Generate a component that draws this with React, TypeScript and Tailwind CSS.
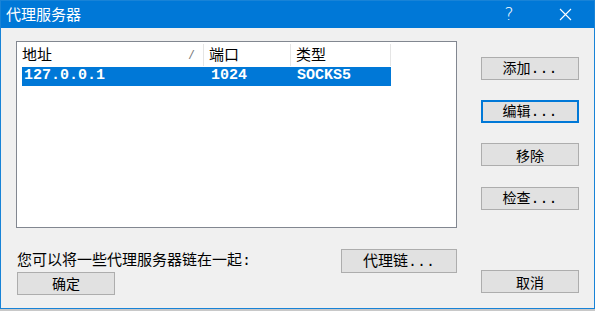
const cjk = "font-['Microsoft_YaHei','Noto_Sans_CJK_SC',sans-serif]";

function Btn({ label, focused = false, className = "" }: { label: string; focused?: boolean; className?: string }) {
  const dots = label.endsWith("...");
  const text = dots ? label.slice(0, -3) : label;
  return (
    <button
      className={`flex h-[23px] w-[98px] items-center justify-center bg-[#e1e1e1] text-[14px] text-black ${cjk} ${
        focused ? "border-2 border-[#0078d7]" : "border border-[#adadad]"
      } ${className}`}
    >
      <span className="leading-none">
        {text}
        {dots && <span className="font-['Liberation_Mono',monospace] text-[15px]">...</span>}
      </span>
    </button>
  );
}

export default function App() {
  return (
    <div className="h-[311px] w-[595px] overflow-hidden bg-[#c8c8c8]">
      <div className="flex h-[309px] flex-col border border-[#1883d7] bg-[#f0f0f0]">
        <header className="flex h-[27px] shrink-0 items-center bg-[#0078d7] text-white">
          <span className={`pl-[5px] text-[15px] ${cjk}`}>代理服务器</span>
          <span className="ml-auto w-[24px] text-center font-['DejaVu_Sans',sans-serif] text-[17px] font-light leading-none">?</span>
          <span className="ml-[32px] mr-[17px] flex w-[24px] justify-center">
            <svg width="13" height="13" viewBox="0 0 13 13" stroke="white" strokeWidth="1.1">
              <path d="M1 1 L12 12 M12 1 L1 12" />
            </svg>
          </span>
        </header>

        <div className="flex flex-1">
          <div className="ml-[15px] flex w-[441px] flex-col">
            <div className="mt-[13px] h-[187px] border border-[#828790] bg-white">
              <div className={`flex h-[25px] items-center text-[15px] ${cjk}`}>
                <div className="flex h-[22px] w-[187px] items-center border-r border-[#e5e5e5] pl-[5px] pr-[10px]">
                  <span>地址</span>
                  <span className="ml-auto text-[#777] font-['Liberation_Sans',sans-serif] text-[13px] italic">/</span>
                </div>
                <div className="flex h-[22px] w-[87px] items-center border-r border-[#e5e5e5] pl-[5px]">端口</div>
                <div className="flex h-[22px] w-[100px] items-center border-r border-[#e5e5e5] pl-[5px]">类型</div>
              </div>
              <div className="ml-[5px] flex h-[19px] w-[369px] items-center bg-[#0078d7] font-['Liberation_Mono',monospace] text-[15px] font-bold text-white">
                <span className="w-[182px] pl-[2px]">127.0.0.1</span>
                <span className="w-[87px] pl-[7px]">1024</span>
                <span className="pl-[6px]">SOCKS5</span>
              </div>
            </div>

            <div className="mt-[20px] flex items-center justify-between">
              <span className={`ml-[1px] text-[15px] ${cjk}`}>
                您可以将一些代理服务器链在一起<span className="font-['Liberation_Mono',monospace]">:</span>
              </span>
              <Btn label="代理链..." className="h-[24px] w-[116px] text-[15px]" />
            </div>
            <Btn label="确定" className="ml-[1px] mt-[-2px]" />
          </div>

          <div className="ml-[24px] flex flex-col">
            <Btn label="添加..." className="mt-[29px]" />
            <Btn label="编辑..." focused className="mt-[20px]" />
            <Btn label="移除" className="mt-[20px]" />
            <Btn label="检查..." className="mt-[21px]" />
            <Btn label="取消" className="mt-[60px]" />
          </div>
        </div>
      </div>
    </div>
  );
}
